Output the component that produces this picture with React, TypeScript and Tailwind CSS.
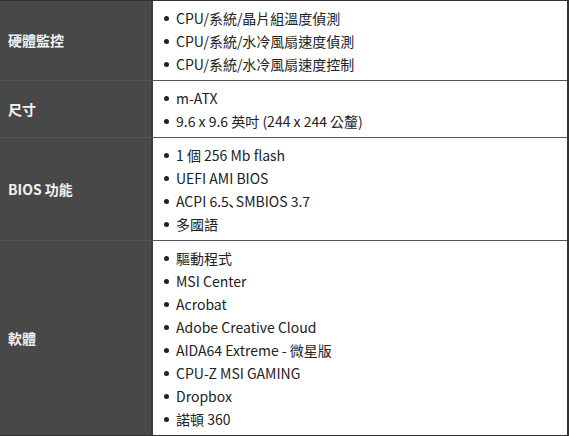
import React from "react";

const rows: { label: string; items: string[] }[] = [
  {
    label: "硬體監控",
    items: ["CPU/系統/晶片組溫度偵測", "CPU/系統/水冷風扇速度偵測", "CPU/系統/水冷風扇速度控制"],
  },
  { label: "尺寸", items: ["m-ATX", "9.6 x 9.6 英吋 (244 x 244 公釐)"] },
  {
    label: "BIOS 功能",
    items: ["1 個 256 Mb flash", "UEFI AMI BIOS", "ACPI 6.5､SMBIOS 3.7", "多國語"],
  },
  {
    label: "軟體",
    items: [
      "驅動程式",
      "MSI Center",
      "Acrobat",
      "Adobe Creative Cloud",
      "AIDA64 Extreme - 微星版",
      "CPU-Z MSI GAMING",
      "Dropbox",
      "諾頓 360",
    ],
  },
];

export default function App() {
  return (
    <div
      className="w-[570px] h-[436px] bg-white overflow-hidden"
      style={{ fontFamily: '"Noto Sans CJK TC", "Noto Sans", sans-serif' }}
    >
      <div className="border-t border-r-2 border-b border-[#333] w-[569px] flex flex-col">
        {rows.map((r, i) => (
          <div
            key={r.label}
            className={`flex ${i > 0 ? "border-t border-[#555]" : ""}`}
          >
            <div className="w-[153px] shrink-0 bg-[#484848] border-r-2 border-[#3a3a3a] flex items-center pl-[8px] text-[14px] font-bold text-[#f2f2f2]">
              {r.label}
            </div>
            <div className="flex-1 pt-[6px] pb-[4px] pl-[10px]">
              {r.items.map((it) => (
                <div key={it} className="flex items-center h-[23px] text-[14px] text-[#222]">
                  <span className="w-[5px] h-[5px] rounded-full bg-[#222] mr-[7px] ml-[1px]" />
                  <span>{it}</span>
                </div>
              ))}
            </div>
          </div>
        ))}
      </div>
    </div>
  );
}
